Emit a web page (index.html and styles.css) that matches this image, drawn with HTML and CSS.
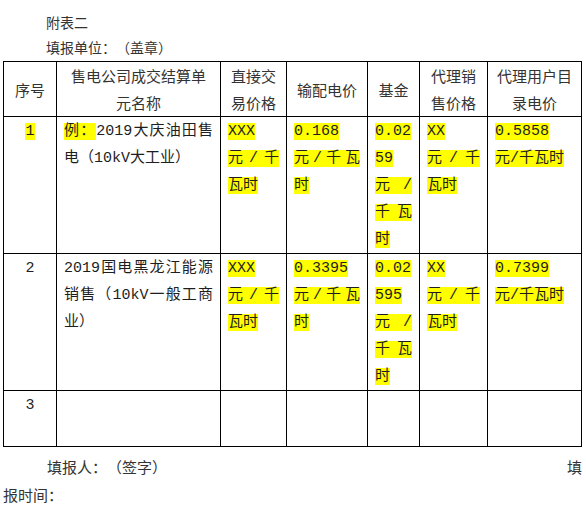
FILE: index.html
```html
<!DOCTYPE html>
<html lang="zh-CN">
<head>
<meta charset="utf-8">
<title>附表二</title>
<link rel="stylesheet" href="styles.css">
</head>
<body>
<div class="page">
  <div class="title">
    <p class="tl">附表二</p>
    <p class="tl">填报单位：（盖章）</p>
  </div>
  <table class="grid">
    <colgroup>
      <col class="w1"><col class="w2"><col class="w3"><col class="w4"><col class="w5"><col class="w6"><col class="w7">
    </colgroup>
    <tr class="head">
      <th>序号</th>
      <th>售电公司成交结算单<br>元名称</th>
      <th>直接交<br>易价格</th>
      <th>输配电价</th>
      <th>基金</th>
      <th>代理销<br>售价格</th>
      <th>代理用户目<br>录电价</th>
    </tr>
    <tr class="row">
      <td class="num"><div class="ln"><span class="hl">1</span></div></td>
      <td>
        <div class="ln j"><span class="hl">例：</span>2019大庆油田售</div>
        <div class="ln">电（10kV大工业）</div>
      </td>
      <td>
        <div class="ln"><span class="hl">XXX</span></div>
        <div class="ln j"><span class="hl">元/千</span></div>
        <div class="ln"><span class="hl">瓦时</span></div>
      </td>
      <td>
        <div class="ln"><span class="hl">0.168</span></div>
        <div class="ln j"><span class="hl">元/千瓦</span></div>
        <div class="ln"><span class="hl">时</span></div>
      </td>
      <td>
        <div class="ln"><span class="hl">0.02</span></div>
        <div class="ln"><span class="hl">59</span></div>
        <div class="ln j"><span class="hl">元/</span></div>
        <div class="ln j"><span class="hl">千瓦</span></div>
        <div class="ln"><span class="hl">时</span></div>
      </td>
      <td>
        <div class="ln"><span class="hl">XX</span></div>
        <div class="ln j"><span class="hl">元/千</span></div>
        <div class="ln"><span class="hl">瓦时</span></div>
      </td>
      <td>
        <div class="ln"><span class="hl">0.5858</span></div>
        <div class="ln"><span class="hl">元/千瓦时</span></div>
      </td>
    </tr>
    <tr class="row">
      <td class="num"><div class="ln">2</div></td>
      <td>
        <div class="ln j">2019国电黑龙江能源</div>
        <div class="ln j">销售（10kV一般工商</div>
        <div class="ln">业）</div>
      </td>
      <td>
        <div class="ln"><span class="hl">XXX</span></div>
        <div class="ln j"><span class="hl">元/千</span></div>
        <div class="ln"><span class="hl">瓦时</span></div>
      </td>
      <td>
        <div class="ln"><span class="hl">0.3395</span></div>
        <div class="ln j"><span class="hl">元/千瓦</span></div>
        <div class="ln"><span class="hl">时</span></div>
      </td>
      <td>
        <div class="ln"><span class="hl">0.02</span></div>
        <div class="ln"><span class="hl">595</span></div>
        <div class="ln j"><span class="hl">元/</span></div>
        <div class="ln j"><span class="hl">千瓦</span></div>
        <div class="ln"><span class="hl">时</span></div>
      </td>
      <td>
        <div class="ln"><span class="hl">XX</span></div>
        <div class="ln j"><span class="hl">元/千</span></div>
        <div class="ln"><span class="hl">瓦时</span></div>
      </td>
      <td>
        <div class="ln"><span class="hl">0.7399</span></div>
        <div class="ln"><span class="hl">元/千瓦时</span></div>
      </td>
    </tr>
    <tr class="last">
      <td class="num"><div class="ln">3</div></td>
      <td></td>
      <td></td>
      <td></td>
      <td></td>
      <td></td>
      <td></td>
    </tr>
  </table>
  <div class="foot">
    <div class="f1"><span>填报人：（签字）</span><span>填</span></div>
    <div class="f2">报时间：</div>
  </div>
</div>
</body>
</html>
```

FILE: styles.css
```css
* {
  box-sizing: border-box;
}

body {
  margin: 0;
  background: #ffffff;
  color: #222222;
  font-family: "Noto Sans CJK SC", "Noto Sans", sans-serif;
  text-spacing-trim: space-all;
}

.page {
  padding: 10px 0 0 3px;
}

.title {
  padding-left: 43px;
  font-size: 14px;
  line-height: 25px;
  color: #333333;
}

.tl {
  margin: 0;
}

.grid {
  margin-top: 1px;
  width: 579px;
  table-layout: fixed;
  border-collapse: separate;
  border-spacing: 0;
  border-top: 1px solid #000000;
  border-left: 1px solid #000000;
}

.w1 { width: 53px; }
.w2 { width: 164px; }
.w3 { width: 66px; }
.w4 { width: 81px; }
.w5 { width: 52px; }
.w6 { width: 68px; }
.w7 { width: 94px; }

.grid th,
.grid td {
  border-right: 1px solid #000000;
  border-bottom: 1px solid #000000;
}

.grid th {
  padding: 0 2px;
  font-weight: normal;
  font-size: 15px;
  line-height: 27px;
  color: #333333;
  text-align: center;
  vertical-align: middle;
}

.grid td {
  padding: 1px 7px 0 7px;
  vertical-align: top;
  font-family: "Liberation Mono", "Noto Sans CJK SC", monospace;
  font-size: 15px;
  color: #1e1e1e;
}

.head { height: 55px; }
.row { height: 136px; }
.last { height: 56px; }

.ln {
  height: 27px;
  line-height: 27px;
  white-space: nowrap;
}

.j {
  text-align: justify;
  text-align-last: justify;
  white-space: normal;
}

.num .ln {
  text-align: center;
}

.hl {
  background: #ffff00;
}

.foot {
  margin-top: 6px;
  width: 579px;
  font-size: 15px;
  line-height: 28px;
  color: #333333;
}

.f1 {
  display: flex;
  justify-content: space-between;
  padding-left: 44px;
}
```
